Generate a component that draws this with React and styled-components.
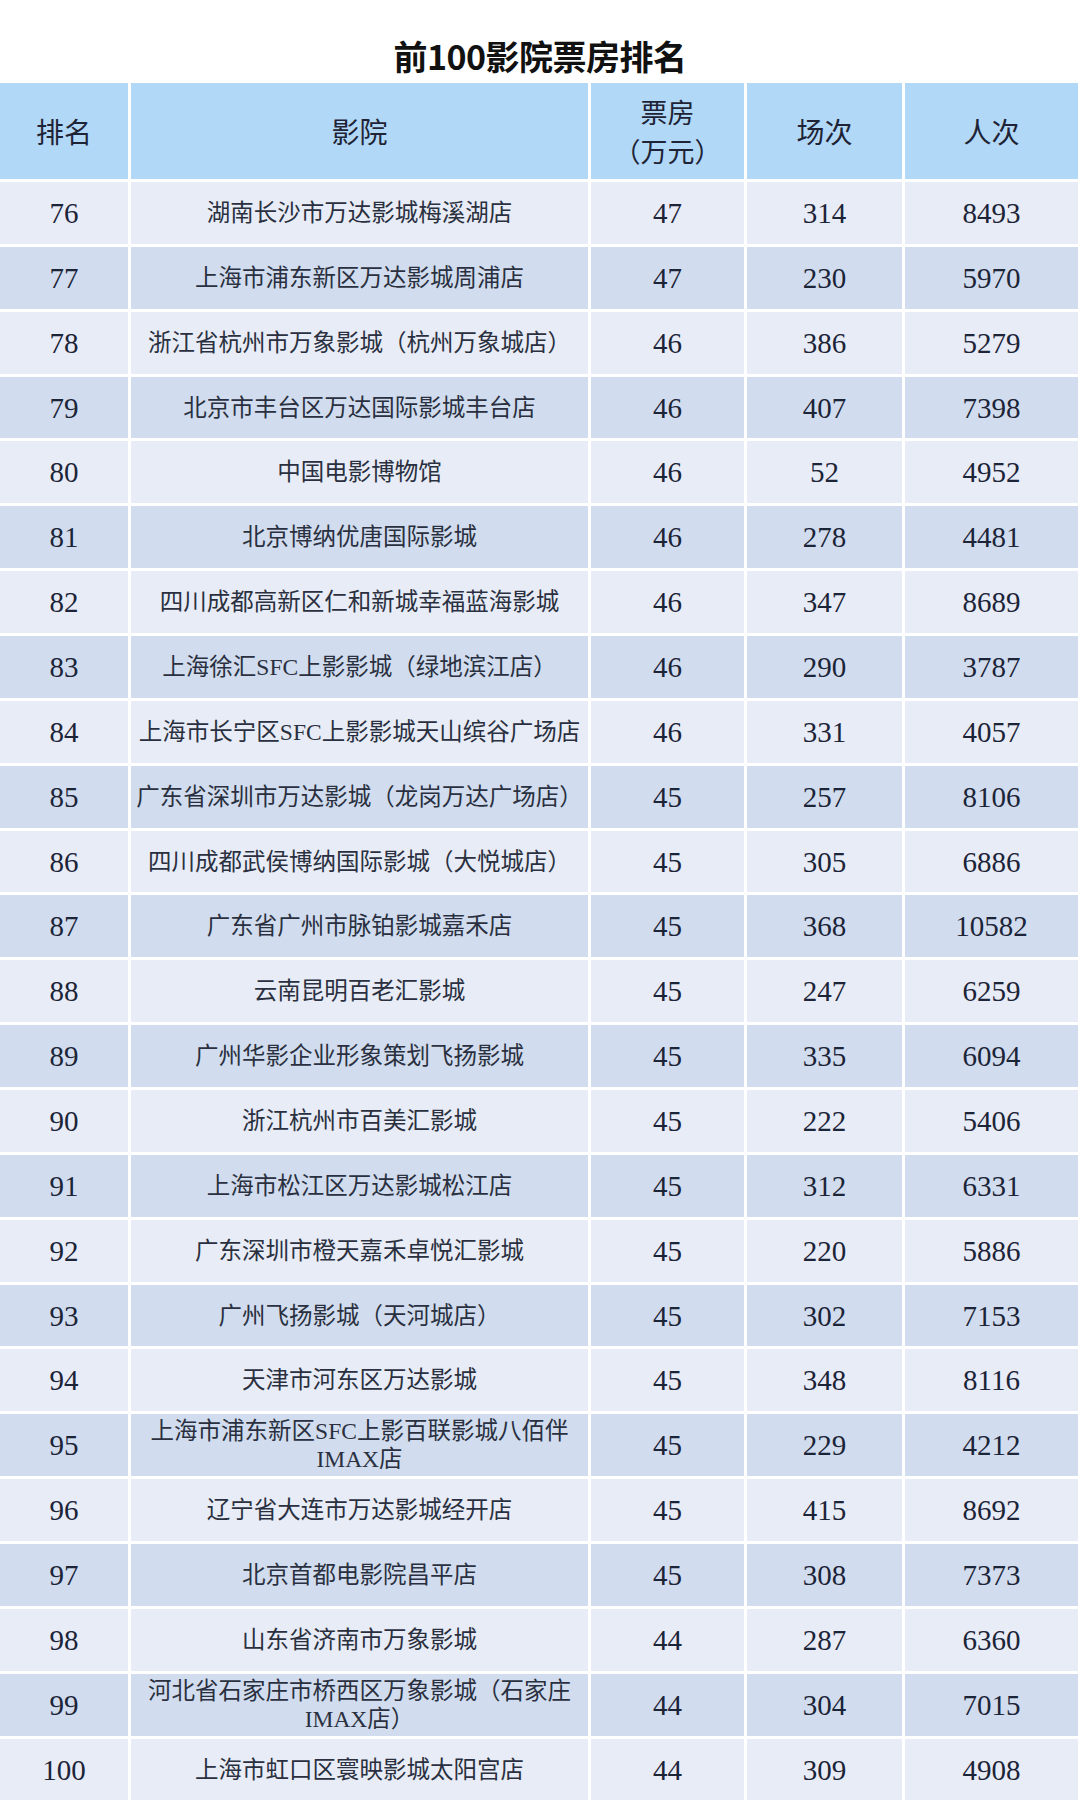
import React from "react";
import styled, { createGlobalStyle } from "styled-components";

const Global = createGlobalStyle`
  html, body { margin: 0; padding: 0; background: #ffffff; }
  body { width: 1080px; font-family: "Liberation Serif", "Noto Sans CJK SC", serif; }
`;

const Page = styled.div`
  width: 1080px;
`;

const Title = styled.h1`
  margin: 0;
  box-sizing: border-box;
  height: 82px;
  padding-top: 37px;
  font-family: "Noto Sans CJK SC", "Noto Sans", sans-serif;
  font-weight: 700;
  font-size: 34px;
  line-height: 38px;
  text-align: center;
  color: #111111;
  letter-spacing: -0.5px;
`;

const Grid = styled.div`
  display: grid;
  grid-template-columns: 128px 457px 153px 155px 173px;
  grid-template-rows: 96px;
  grid-auto-rows: 61.86px;
  gap: 3px;
  width: 1078px;
  padding-top: 1px;
  background: #ffffff;
`;

const HeadCell = styled.div`
  display: flex;
  flex-direction: column;
  align-items: center;
  justify-content: center;
  text-align: center;
  background: #b2d8f8;
  color: #1e2436;
  font-family: "Noto Sans CJK SC", sans-serif;
  font-size: ${(p) => (p.$twoLine ? "27px" : "28px")};
  line-height: ${(p) => (p.$twoLine ? "39px" : "40px")};
  font-weight: 400;
`;

const HeadLine = styled.span`
  display: block;
`;

const Cell = styled.div`
  display: flex;
  align-items: center;
  justify-content: center;
  text-align: center;
  background: ${(p) => (p.$alt ? "#d1ddee" : "#e8ecf6")};
  color: ${(p) => (p.$name ? "#2a3040" : "#1c2438")};
  font-family: "Liberation Serif", "Noto Sans CJK SC", serif;
  font-size: ${(p) => (p.$name ? "23.5px" : "29px")};
  line-height: ${(p) => (p.$name ? "28px" : "32px")};
  white-space: nowrap;
  padding: 0 6px;
  overflow: hidden;
`;

const rows = [
  [76, "湖南长沙市万达影城梅溪湖店", 47, 314, 8493],
  [77, "上海市浦东新区万达影城周浦店", 47, 230, 5970],
  [78, "浙江省杭州市万象影城（杭州万象城店）", 46, 386, 5279],
  [79, "北京市丰台区万达国际影城丰台店", 46, 407, 7398],
  [80, "中国电影博物馆", 46, 52, 4952],
  [81, "北京博纳优唐国际影城", 46, 278, 4481],
  [82, "四川成都高新区仁和新城幸福蓝海影城", 46, 347, 8689],
  [83, "上海徐汇SFC上影影城（绿地滨江店）", 46, 290, 3787],
  [84, "上海市长宁区SFC上影影城天山缤谷广场店", 46, 331, 4057],
  [85, "广东省深圳市万达影城（龙岗万达广场店）", 45, 257, 8106],
  [86, "四川成都武侯博纳国际影城（大悦城店）", 45, 305, 6886],
  [87, "广东省广州市脉铂影城嘉禾店", 45, 368, 10582],
  [88, "云南昆明百老汇影城", 45, 247, 6259],
  [89, "广州华影企业形象策划飞扬影城", 45, 335, 6094],
  [90, "浙江杭州市百美汇影城", 45, 222, 5406],
  [91, "上海市松江区万达影城松江店", 45, 312, 6331],
  [92, "广东深圳市橙天嘉禾卓悦汇影城", 45, 220, 5886],
  [93, "广州飞扬影城（天河城店）", 45, 302, 7153],
  [94, "天津市河东区万达影城", 45, 348, 8116],
  [95, ["上海市浦东新区SFC上影百联影城八佰伴", "IMAX店"], 45, 229, 4212],
  [96, "辽宁省大连市万达影城经开店", 45, 415, 8692],
  [97, "北京首都电影院昌平店", 45, 308, 7373],
  [98, "山东省济南市万象影城", 44, 287, 6360],
  [99, ["河北省石家庄市桥西区万象影城（石家庄", "IMAX店）"], 44, 304, 7015],
  [100, "上海市虹口区寰映影城太阳宫店", 44, 309, 4908],
];

function Name({ value }) {
  if (Array.isArray(value)) {
    return (
      <span>
        {value[0]}
        <br />
        {value[1]}
      </span>
    );
  }
  return <span>{value}</span>;
}

export default function App() {
  return (
    <Page>
      <Global />
      <Title>前100影院票房排名</Title>
      <Grid>
        <HeadCell>排名</HeadCell>
        <HeadCell>影院</HeadCell>
        <HeadCell $twoLine>
          <HeadLine>票房</HeadLine>
          <HeadLine>（万元）</HeadLine>
        </HeadCell>
        <HeadCell>场次</HeadCell>
        <HeadCell>人次</HeadCell>
        {rows.map((r, i) => {
          const alt = i % 2 === 1;
          return (
            <React.Fragment key={r[0]}>
              <Cell $alt={alt}>{r[0]}</Cell>
              <Cell $alt={alt} $name>
                <Name value={r[1]} />
              </Cell>
              <Cell $alt={alt}>{r[2]}</Cell>
              <Cell $alt={alt}>{r[3]}</Cell>
              <Cell $alt={alt}>{r[4]}</Cell>
            </React.Fragment>
          );
        })}
      </Grid>
    </Page>
  );
}
